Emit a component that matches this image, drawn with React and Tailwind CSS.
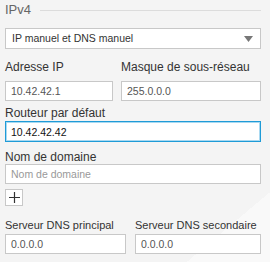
export default function App() {
  return (
    <main className="w-[270px] h-[262px] overflow-hidden bg-[linear-gradient(140deg,#f4f4f4_85.7%,#f9f9f9_85.7%)] font-['Liberation_Sans',Arial,sans-serif] text-[12px] text-[#333] pl-[5px] pr-[9px] pt-[2px]">
      <div className="flex items-center gap-[9px] h-[16px]">
        <span className="text-[13px] text-[#666]">IPv4</span>
        <div className="flex-1 h-px bg-[#dcdcdc]" />
      </div>

      <div className="mt-[10px] h-[21px] border border-[#c8c8c8] bg-white flex items-center justify-between pl-[6px] pr-[7px]">
        <span className="text-[10.5px] text-[#333]">IP manuel et DNS manuel</span>
        <svg width="9" height="6" viewBox="0 0 9 6">
          <path d="M0 0h9L4.5 6z" fill="#777" />
        </svg>
      </div>

      <div className="mt-[10px] flex gap-[8px]">
        <div className="w-[108px]">
          <label className="block leading-[16px]">Adresse IP</label>
          <input
            readOnly
            value="10.42.42.1"
            className="mt-[6px] w-full h-[20px] border border-[#c8c8c8] bg-white px-[5px] text-[10.5px] text-[#555] outline-none"
          />
        </div>
        <div className="flex-1">
          <label className="block leading-[16px] whitespace-nowrap">Masque de sous-réseau</label>
          <input
            readOnly
            value="255.0.0.0"
            className="mt-[6px] w-full h-[20px] border border-[#c8c8c8] bg-white px-[5px] text-[10.5px] text-[#555] outline-none"
          />
        </div>
      </div>

      <div className="mt-[5px]">
        <label className="block leading-[14px]">Routeur par défaut</label>
        <input
          readOnly
          value="10.42.42.42"
          className="mt-[1px] w-full h-[21px] border border-[#1f9bd7] shadow-[inset_0_0_0_1px_#a9d9f1] bg-white px-[5px] text-[10.5px] text-[#111] outline-none"
        />
      </div>

      <div className="mt-[9px]">
        <label className="block leading-[12px]">Nom de domaine</label>
        <input
          readOnly
          placeholder="Nom de domaine"
          className="mt-[1px] w-full h-[20px] border border-[#c8c8c8] bg-white px-[5px] text-[10.5px] placeholder:text-[#999] outline-none"
        />
      </div>

      <button className="mt-[5px] w-[18px] h-[17px] border border-[#c8c8c8] bg-white flex items-center justify-center">
        <svg width="11" height="11" viewBox="0 0 11 11">
          <path d="M5.5 0v11M0 5.5h11" stroke="#333" strokeWidth="1.2" />
        </svg>
      </button>

      <div className="mt-[11px] flex gap-[9px]">
        <div className="w-[121px]">
          <label className="block leading-[16px] whitespace-nowrap text-[11px]">Serveur DNS principal</label>
          <input
            readOnly
            value="0.0.0.0"
            className="mt-[1px] w-full h-[20px] border border-[#c8c8c8] bg-white px-[5px] text-[10.5px] text-[#555] outline-none"
          />
        </div>
        <div className="flex-1">
          <label className="block leading-[16px] whitespace-nowrap text-[11px]">Serveur DNS secondaire</label>
          <input
            readOnly
            value="0.0.0.0"
            className="mt-[1px] w-full h-[20px] border border-[#c8c8c8] bg-white px-[5px] text-[10.5px] text-[#555] outline-none"
          />
        </div>
      </div>
    </main>
  );
}
